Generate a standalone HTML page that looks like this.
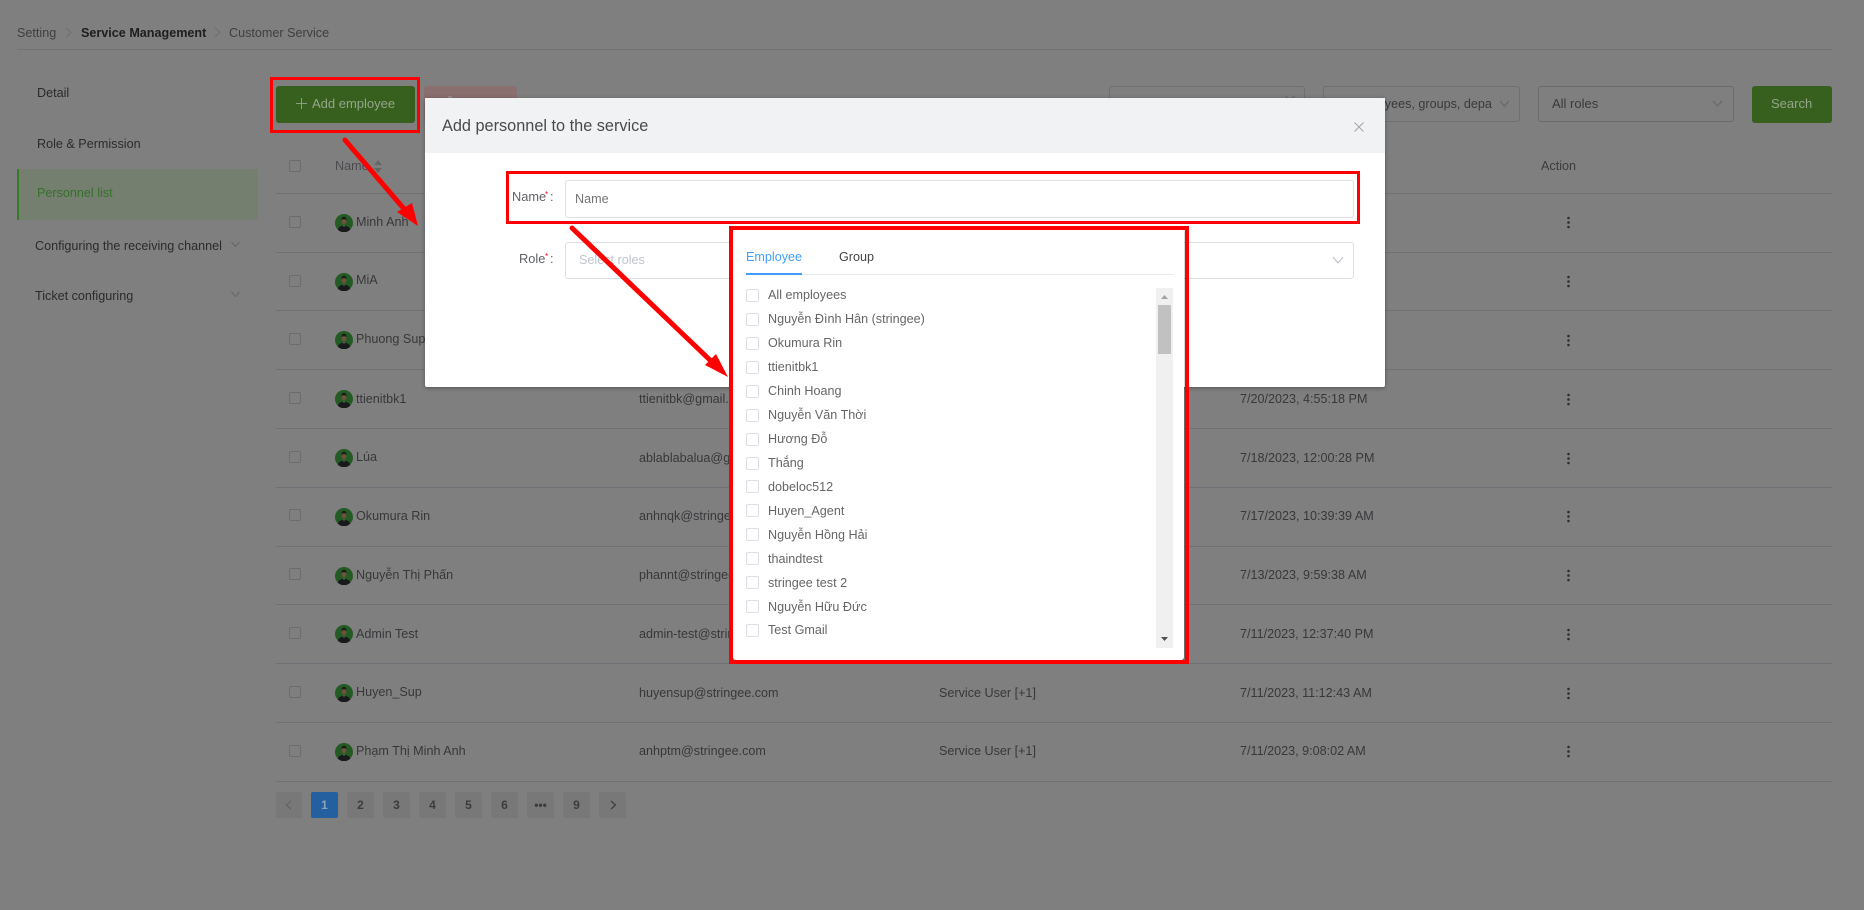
<!DOCTYPE html>
<html lang="en"><head><meta charset="utf-8"><title>Add personnel to the service</title>
<style>
html,body{margin:0;padding:0;width:1864px;height:910px;overflow:hidden;background:#7f7f7f;font-family:"Liberation Sans","Noto Sans CJK SC",sans-serif;font-size:12.6px;color:#38383b}
div,span,svg{position:absolute}
.t{white-space:nowrap;line-height:16px}
.l{left:276px;width:1556px;height:1px;background:#707177}
.cb{left:289px;width:10px;height:10px;border:1px solid #6c6c70;border-radius:2px}
.av{left:335px;width:18px;height:18px}
.dot{left:1567px;width:3px;height:14px}
.sel{height:34px;top:86px;border:1px solid #6e6f75;border-radius:3px}
.pg{top:792px;width:27px;height:26px;background:#787878;border-radius:2px;text-align:center;line-height:26px;font-weight:bold;font-size:12px;color:#3c3c3c}
.k{left:746px;width:11px;height:11px;border:1px solid #dcdfe6;border-radius:2px;background:#fff}
.d{left:768px;color:#666;white-space:nowrap;line-height:16px}
.r{position:absolute;border-style:solid;border-color:#f00;box-sizing:border-box}
</style></head><body>
<svg width="0" height="0" style="position:absolute"><defs>
<symbol id="a" viewBox="0 0 18 18"><circle cx="9" cy="9" r="9" fill="#245a24"/><path d="M2.800 15.800c.8-3 3.200-3.900 6.200-4.100 3 .2 5.400 1.100 6.200 4.100A9 9 0 0 1 2.800 15.800z" fill="#17191c"/><ellipse cx="9" cy="7.200" rx="2.300" ry="3.400" fill="#6d533d"/><path d="M6.600 6.200c-.2-2.600 1.300-3.400 2.400-3.400s2.600.8 2.400 3.400C10.800 5 7.200 5 6.600 6.200z" fill="#1c1a17"/><path d="M8.200 11.500h1.600L9 13.500z" fill="#6f6f6f"/></symbol>
<symbol id="v" viewBox="0 0 3 14"><circle cx="1.500" cy="3" r="1.300" fill="#2e2e30"/><circle cx="1.500" cy="7.500" r="1.300" fill="#2e2e30"/><circle cx="1.500" cy="12" r="1.300" fill="#2e2e30"/></symbol>
</defs></svg>

<!-- Breadcrumb -->
<div class="t" style="left:17px;top:25px;color:#3f3f42">Setting</div>
<svg style="left:65px;top:27px" width="7" height="11"><polyline points="1,1 6,5.500 1,10" fill="none" stroke="#707070" stroke-width="1"/></svg>
<div class="t" style="left:81px;top:25px;font-weight:bold;color:#1e1e1e">Service Management</div>
<svg style="left:214px;top:27px" width="7" height="11"><polyline points="1,1 6,5.500 1,10" fill="none" stroke="#707070" stroke-width="1"/></svg>
<div class="t" style="left:229px;top:25px;color:#3f3f42">Customer Service</div>
<div style="left:17px;top:49px;width:1815px;height:1px;background:#737373"></div>

<!-- Sidebar -->
<div class="t" style="left:37px;top:85px;color:#2b2b2b">Detail</div>
<div class="t" style="left:37px;top:136px;color:#2b2b2b">Role &amp; Permission</div>
<div style="left:17px;top:169px;width:241px;height:51px;background:#747f70"></div>
<div style="left:17px;top:169px;width:2px;height:51px;background:#377a28"></div>
<div class="t" style="left:37px;top:185px;color:#37702c">Personnel list</div>
<div class="t" style="left:35px;top:238px;color:#2b2b2b">Configuring the receiving channel</div>
<svg style="left:231px;top:241px" width="9" height="7"><polyline points="0.500,1 4.500,5.500 8.500,1" fill="none" stroke="#666" stroke-width="1"/></svg>
<div class="t" style="left:35px;top:288px;color:#2b2b2b">Ticket configuring</div>
<svg style="left:231px;top:291px" width="9" height="7"><polyline points="0.500,1 4.500,5.500 8.500,1" fill="none" stroke="#666" stroke-width="1"/></svg>

<!-- Toolbar -->
<div style="left:276px;top:86px;width:139px;height:37px;background:#37601f;border-radius:3px"></div>
<svg style="left:296px;top:98px" width="11" height="11"><path d="M5.500 0v11M0 5.500h11" stroke="#8b9e82" stroke-width="1"/></svg>
<div class="t" style="left:312px;top:96px;font-size:13px;color:#93a58a">Add employee</div>
<div style="left:424px;top:86px;width:93px;height:37px;background:#8a6f6f;border-radius:3px"></div>
<div style="left:448px;top:96px;width:4px;height:2px;background:#9a8a8a"></div>
<div class="sel" style="left:1109px;width:194px"></div>
<svg style="left:1285px;top:95px" width="10" height="7"><polyline points="0.500,1 5,5.500 9.500,1" fill="none" stroke="#666" stroke-width="1"/></svg>
<div class="sel" style="left:1323px;width:195px"></div>
<div class="t" style="left:1333px;top:96px;width:159px;overflow:hidden;font-size:12.600px;color:#3a3a3d">All employees, groups, departments</div>
<svg style="left:1499px;top:100px" width="11" height="8"><polyline points="1,1 5.500,6 10,1" fill="none" stroke="#666" stroke-width="1"/></svg>
<div class="sel" style="left:1538px;width:194px;border-color:#6a6b71"></div>
<div class="t" style="left:1552px;top:96px;font-size:13px;color:#3a3a3d">All roles</div>
<svg style="left:1712px;top:100px" width="11" height="8"><polyline points="1,1 5.500,6 10,1" fill="none" stroke="#666" stroke-width="1"/></svg>
<div style="left:1752px;top:86px;width:80px;height:37px;background:#37601f;border-radius:3px"></div>
<div class="t" style="left:1771px;top:96px;font-size:13px;color:#93a58a">Search</div>

<!-- Table -->
<div class="cb" style="top:160px"></div>
<div class="t" style="left:335px;top:158px;color:#4c4c50">Name</div>
<svg style="left:374px;top:160px" width="8" height="13"><path d="M4 0l4 5H0zM4 13L0 8h8z" fill="#666"/></svg>
<div class="t" style="left:1541px;top:158px;color:#3c3c3f">Action</div>
<div class="l" style="top:193px"></div><div class="l" style="top:252px"></div><div class="l" style="top:310px"></div><div class="l" style="top:369px"></div><div class="l" style="top:428px"></div><div class="l" style="top:487px"></div><div class="l" style="top:546px"></div><div class="l" style="top:604px"></div><div class="l" style="top:663px"></div><div class="l" style="top:722px"></div><div class="l" style="top:781px"></div>

<div class="cb" style="top:216px"></div><svg class="av" style="top:214px"><use href="#a"/></svg><div class="t" style="left:356px;top:214px">Minh Anh</div><svg class="dot" style="top:215px"><use href="#v"/></svg>
<div class="cb" style="top:275px"></div><svg class="av" style="top:273px"><use href="#a"/></svg><div class="t" style="left:356px;top:272px">MiA</div><svg class="dot" style="top:274px"><use href="#v"/></svg>
<div class="cb" style="top:333px"></div><svg class="av" style="top:331px"><use href="#a"/></svg><div class="t" style="left:356px;top:331px">Phuong Sup</div><svg class="dot" style="top:333px"><use href="#v"/></svg>
<div class="cb" style="top:392px"></div><svg class="av" style="top:390px"><use href="#a"/></svg><div class="t" style="left:356px;top:391px">ttienitbk1</div><div class="t" style="left:639px;top:391px">ttienitbk@gmail.com</div><div class="t" style="left:1240px;top:391px">7/20/2023, 4:55:18 PM</div><svg class="dot" style="top:392px"><use href="#v"/></svg>
<div class="cb" style="top:451px"></div><svg class="av" style="top:449px"><use href="#a"/></svg><div class="t" style="left:356px;top:449px">Lúa</div><div class="t" style="left:639px;top:450px">ablablabalua@gmail.com</div><div class="t" style="left:1240px;top:450px">7/18/2023, 12:00:28 PM</div><svg class="dot" style="top:451px"><use href="#v"/></svg>
<div class="cb" style="top:509px"></div><svg class="av" style="top:508px"><use href="#a"/></svg><div class="t" style="left:356px;top:508px">Okumura Rin</div><div class="t" style="left:639px;top:508px">anhnqk@stringee.com</div><div class="t" style="left:1240px;top:508px">7/17/2023, 10:39:39 AM</div><svg class="dot" style="top:509px"><use href="#v"/></svg>
<div class="cb" style="top:568px"></div><svg class="av" style="top:567px"><use href="#a"/></svg><div class="t" style="left:356px;top:567px">Nguyễn Thị Phấn</div><div class="t" style="left:639px;top:567px">phannt@stringee.com</div><div class="t" style="left:1240px;top:567px">7/13/2023, 9:59:38 AM</div><svg class="dot" style="top:568px"><use href="#v"/></svg>
<div class="cb" style="top:627px"></div><svg class="av" style="top:625px"><use href="#a"/></svg><div class="t" style="left:356px;top:626px">Admin Test</div><div class="t" style="left:639px;top:626px">admin-test@stringee.com</div><div class="t" style="left:1240px;top:626px">7/11/2023, 12:37:40 PM</div><svg class="dot" style="top:627px"><use href="#v"/></svg>
<div class="cb" style="top:686px"></div><svg class="av" style="top:684px"><use href="#a"/></svg><div class="t" style="left:356px;top:684px">Huyen_Sup</div><div class="t" style="left:639px;top:685px">huyensup@stringee.com</div><div class="t" style="left:939px;top:685px">Service User [+1]</div><div class="t" style="left:1240px;top:685px">7/11/2023, 11:12:43 AM</div><svg class="dot" style="top:686px"><use href="#v"/></svg>
<div class="cb" style="top:745px"></div><svg class="av" style="top:743px"><use href="#a"/></svg><div class="t" style="left:356px;top:743px">Phạm Thị Minh Anh</div><div class="t" style="left:639px;top:743px">anhptm@stringee.com</div><div class="t" style="left:939px;top:743px">Service User [+1]</div><div class="t" style="left:1240px;top:743px">7/11/2023, 9:08:02 AM</div><svg class="dot" style="top:744px"><use href="#v"/></svg>

<!-- Pagination -->
<div class="pg" style="left:276px;width:26px"><svg style="left:9px;top:8px" width="7" height="10"><polyline points="6,1 1.500,5 6,9" fill="none" stroke="#62636a" stroke-width="1.300"/></svg></div>
<div class="pg" style="left:311px;background:#24609f;color:#8aa3bd">1</div>
<div class="pg" style="left:347px">2</div><div class="pg" style="left:383px">3</div><div class="pg" style="left:419px">4</div><div class="pg" style="left:455px">5</div><div class="pg" style="left:491px">6</div><div class="pg" style="left:527px">•••</div><div class="pg" style="left:563px">9</div>
<div class="pg" style="left:599px"><svg style="left:11px;top:8px" width="7" height="10"><polyline points="1,1 5.500,5 1,9" fill="none" stroke="#3c3c3f" stroke-width="1.200"/></svg></div>

<!-- Modal -->
<div style="left:425px;top:98px;width:960px;height:289px;background:#fff;border-radius:2px;box-shadow:0 1px 4px rgba(0,0,0,.35)"></div>
<div style="left:425px;top:98px;width:960px;height:55px;background:#f1f2f4"></div>
<div class="t" style="left:442px;top:117px;font-size:16.3px;line-height:18px;color:#4a4a4a">Add personnel to the service</div>
<svg style="left:1354px;top:122px" width="10" height="10"><path d="M.5.500l9 9M9.500.500l-9 9" stroke="#a3a3a3" stroke-width="1"/></svg>
<div class="t" style="left:512px;top:189px;font-size:12.800px;color:#606266">Name</div><div class="t" style="left:550px;top:189px;color:#606266">:</div><div class="t" style="left:545px;top:187px;color:#f00;font-size:8px">*</div>
<div class="t" style="left:519px;top:251px;font-size:12.800px;color:#606266">Role</div><div class="t" style="left:550px;top:251px;color:#606266">:</div><div class="t" style="left:545px;top:249px;color:#f00;font-size:8px">*</div>
<div style="left:565px;top:180px;width:787px;height:36px;border:1px solid #dcdfe6;border-radius:3px;background:#fff"></div>
<div class="t" style="left:575px;top:191px;color:#757575">Name</div>
<div style="left:565px;top:242px;width:787px;height:35px;border:1px solid #dcdfe6;border-radius:3px;background:#fff"></div>
<div class="t" style="left:579px;top:252px;color:#c0c4cc">Select roles</div>
<svg style="left:1332px;top:256px" width="12" height="8"><polyline points="1,1 6,7 11,1" fill="none" stroke="#b8bcc4" stroke-width="1"/></svg>

<!-- Dropdown -->
<div style="left:733px;top:229px;width:451px;height:431px;background:#fff;border-radius:3px;box-shadow:0 0 3px rgba(0,0,0,.4)"></div>
<div class="t" style="left:746px;top:249px;color:#409eff">Employee</div>
<div class="t" style="left:839px;top:249px;color:#444">Group</div>
<div style="left:746px;top:274px;width:427px;height:1px;background:#e4e7ed"></div>
<div style="left:746px;top:273px;width:56px;height:2px;background:#409eff"></div>

<div class="k" style="top:289px"></div><div class="d" style="top:287px">All employees</div>
<div class="k" style="top:313px"></div><div class="d" style="top:311px">Nguyễn Đình Hân (stringee)</div>
<div class="k" style="top:337px"></div><div class="d" style="top:335px">Okumura Rin</div>
<div class="k" style="top:361px"></div><div class="d" style="top:359px">ttienitbk1</div>
<div class="k" style="top:385px"></div><div class="d" style="top:383px">Chinh Hoang</div>
<div class="k" style="top:409px"></div><div class="d" style="top:407px">Nguyễn Văn Thời</div>
<div class="k" style="top:433px"></div><div class="d" style="top:431px">Hương Đỗ</div>
<div class="k" style="top:457px"></div><div class="d" style="top:455px">Thắng</div>
<div class="k" style="top:480px"></div><div class="d" style="top:479px">dobeloc512</div>
<div class="k" style="top:504px"></div><div class="d" style="top:503px">Huyen_Agent</div>
<div class="k" style="top:528px"></div><div class="d" style="top:527px">Nguyễn Hồng Hải</div>
<div class="k" style="top:552px"></div><div class="d" style="top:551px">thaindtest</div>
<div class="k" style="top:576px"></div><div class="d" style="top:575px">stringee test 2</div>
<div class="k" style="top:600px"></div><div class="d" style="top:599px">Nguyễn Hữu Đức</div>
<div class="k" style="top:624px"></div><div class="d" style="top:622px">Test Gmail</div>

<div style="left:1156px;top:288px;width:17px;height:360px;background:#f0f0f0"></div>
<div style="left:1158px;top:305px;width:13px;height:49px;background:#c1c1c1"></div>
<svg style="left:1161px;top:295px" width="7" height="4"><path d="M3.500 0L7 4H0z" fill="#a3a3a3"/></svg>
<svg style="left:1161px;top:637px" width="7" height="4"><path d="M3.500 4L0 0h7z" fill="#505050"/></svg>

<!-- Annotations -->
<div class="r" style="left:270px;top:77px;width:150px;height:56px;border-width:3px"></div>
<div class="r" style="left:506px;top:171px;width:854px;height:53px;border-width:3px"></div>
<div class="r" style="left:729px;top:226px;width:460px;height:438px;border-width:4px"></div>
<svg style="left:0;top:0" width="1864" height="910">
<line x1="345" y1="140" x2="405" y2="210" stroke="#f00" stroke-width="5" stroke-linecap="round"/>
<polygon points="418,226 397,212 412,203" fill="#f00"/>
<line x1="572" y1="228" x2="712" y2="362" stroke="#f00" stroke-width="5" stroke-linecap="round"/>
<polygon points="728,377 705,365 716,354" fill="#f00"/>
</svg>
</body></html>
